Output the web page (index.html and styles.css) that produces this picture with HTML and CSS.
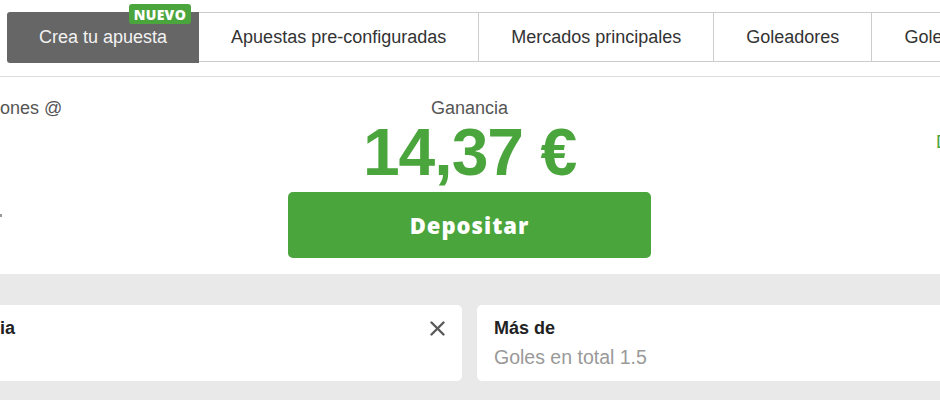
FILE: index.html
```html
<!DOCTYPE html>
<html lang="es">
<head>
<meta charset="utf-8">
<title>Crea tu apuesta</title>
<link rel="stylesheet" href="styles.css">
</head>
<body>
  <nav class="tabs">
    <div class="tab tab-active">Crea tu apuesta<span class="badge">NUEVO</span></div>
    <div class="tab">Apuestas pre-configuradas</div>
    <div class="tab">Mercados principales</div>
    <div class="tab">Goleadores</div>
    <div class="tab">Goleadores en el partido</div>
  </nav>

  <section class="summary">
    <div class="summary-side summary-left">
      <span class="side-label">ones @</span>
      <span class="side-mark"></span>
    </div>
    <div class="summary-main">
      <div class="gain-label">Ganancia</div>
      <div class="gain-amount">14,37 €</div>
      <button class="deposit-btn" type="button">Depositar</button>
    </div>
    <div class="summary-side summary-right">
      <span class="side-link">Detalles</span>
    </div>
  </section>

  <section class="selections">
    <div class="cards">
      <div class="card">
        <div class="card-head">
          <span class="card-title">ia</span>
          <svg class="close-icon" width="15" height="15" viewBox="0 0 15 15" aria-hidden="true">
            <path d="M1.5 1.5 L13.5 13.5 M13.5 1.5 L1.5 13.5" stroke="#5a5a5a" stroke-width="2.4" stroke-linecap="round" fill="none"/>
          </svg>
        </div>
      </div>
      <div class="card">
        <div class="card-head">
          <span class="card-title">Más de</span>
        </div>
        <div class="card-sub">Goles en total 1.5</div>
      </div>
    </div>
  </section>
</body>
</html>
```

FILE: styles.css
```css
* {
  box-sizing: border-box;
}

html, body {
  margin: 0;
  padding: 0;
}

body {
  width: 940px;
  height: 400px;
  overflow: hidden;
  background: #ffffff;
  font-family: "Liberation Sans", Arial, sans-serif;
  color: #333333;
}

/* Tabs */
.tabs {
  display: flex;
  align-items: flex-start;
  margin-top: 12px;
  margin-bottom: 13px;
  padding-left: 7px;
  white-space: nowrap;
}

.tab {
  flex: 0 0 auto;
  position: relative;
  height: 50px;
  display: flex;
  align-items: center;
  padding: 0 32px;
  font-size: 18px;
  color: #333333;
  background: #ffffff;
  border-top: 1px solid #cccccc;
  border-bottom: 1px solid #cccccc;
  border-right: 1px solid #cccccc;
}

.tab-active {
  height: 51px;
  background: #666666;
  color: #f2f2f2;
  border: none;
  border-radius: 3px 0 0 3px;
}

.badge {
  position: absolute;
  top: -8px;
  right: 8px;
  height: 20px;
  padding: 0 5px;
  display: flex;
  align-items: center;
  background: #4ba53d;
  color: #ffffff;
  border-radius: 3px;
  font-family: "Open Sans", sans-serif;
  font-weight: 800;
  font-size: 14px;
  letter-spacing: 0.3px;
}

/* Summary */
.summary {
  display: grid;
  grid-template-columns: 288px 363px 289px;
  border-top: 1px solid #dddddd;
  padding: 21px 0 16px;
}

.summary-side {
  display: flex;
  flex-direction: column;
  white-space: nowrap;
  overflow: hidden;
}

.side-label {
  font-size: 18px;
  line-height: 20px;
  color: #555555;
}

.side-mark {
  width: 2px;
  height: 3px;
  margin-top: 96px;
  background: #9a9a9a;
}

.summary-right {
  padding-left: 285px;
  padding-top: 34px;
}

.side-link {
  font-size: 18px;
  line-height: 20px;
  color: #4ba53d;
}

.summary-main {
  display: flex;
  flex-direction: column;
  align-items: center;
}

.gain-label {
  font-size: 18px;
  line-height: 20px;
  color: #555555;
}

.gain-amount {
  font-size: 66px;
  line-height: 68px;
  font-weight: 700;
  color: #4ba53d;
  letter-spacing: -1px;
}

.deposit-btn {
  margin-top: 6px;
  width: 363px;
  height: 66px;
  border: none;
  border-radius: 5px;
  background: #4ba53d;
  color: #ffffff;
  font-family: "Open Sans", sans-serif;
  font-weight: 800;
  font-size: 22px;
  letter-spacing: 1px;
  cursor: pointer;
}

/* Selections */
.selections {
  background: #e9e9e9;
  padding-top: 31px;
  height: 126px;
}

.cards {
  display: flex;
  gap: 15px;
  margin-left: -17px;
}

.card {
  flex: 0 0 479px;
  height: 76px;
  background: #ffffff;
  border-radius: 5px;
  padding: 13px 17px 0;
}

.card-head {
  display: flex;
  align-items: center;
  justify-content: space-between;
  height: 21px;
}

.card-title {
  font-size: 18px;
  line-height: 21px;
  font-weight: 700;
  color: #222222;
}

.close-icon {
  display: block;
}

.card-sub {
  margin-top: 6px;
  font-size: 19.5px;
  line-height: 24px;
  color: #999999;
}
```
